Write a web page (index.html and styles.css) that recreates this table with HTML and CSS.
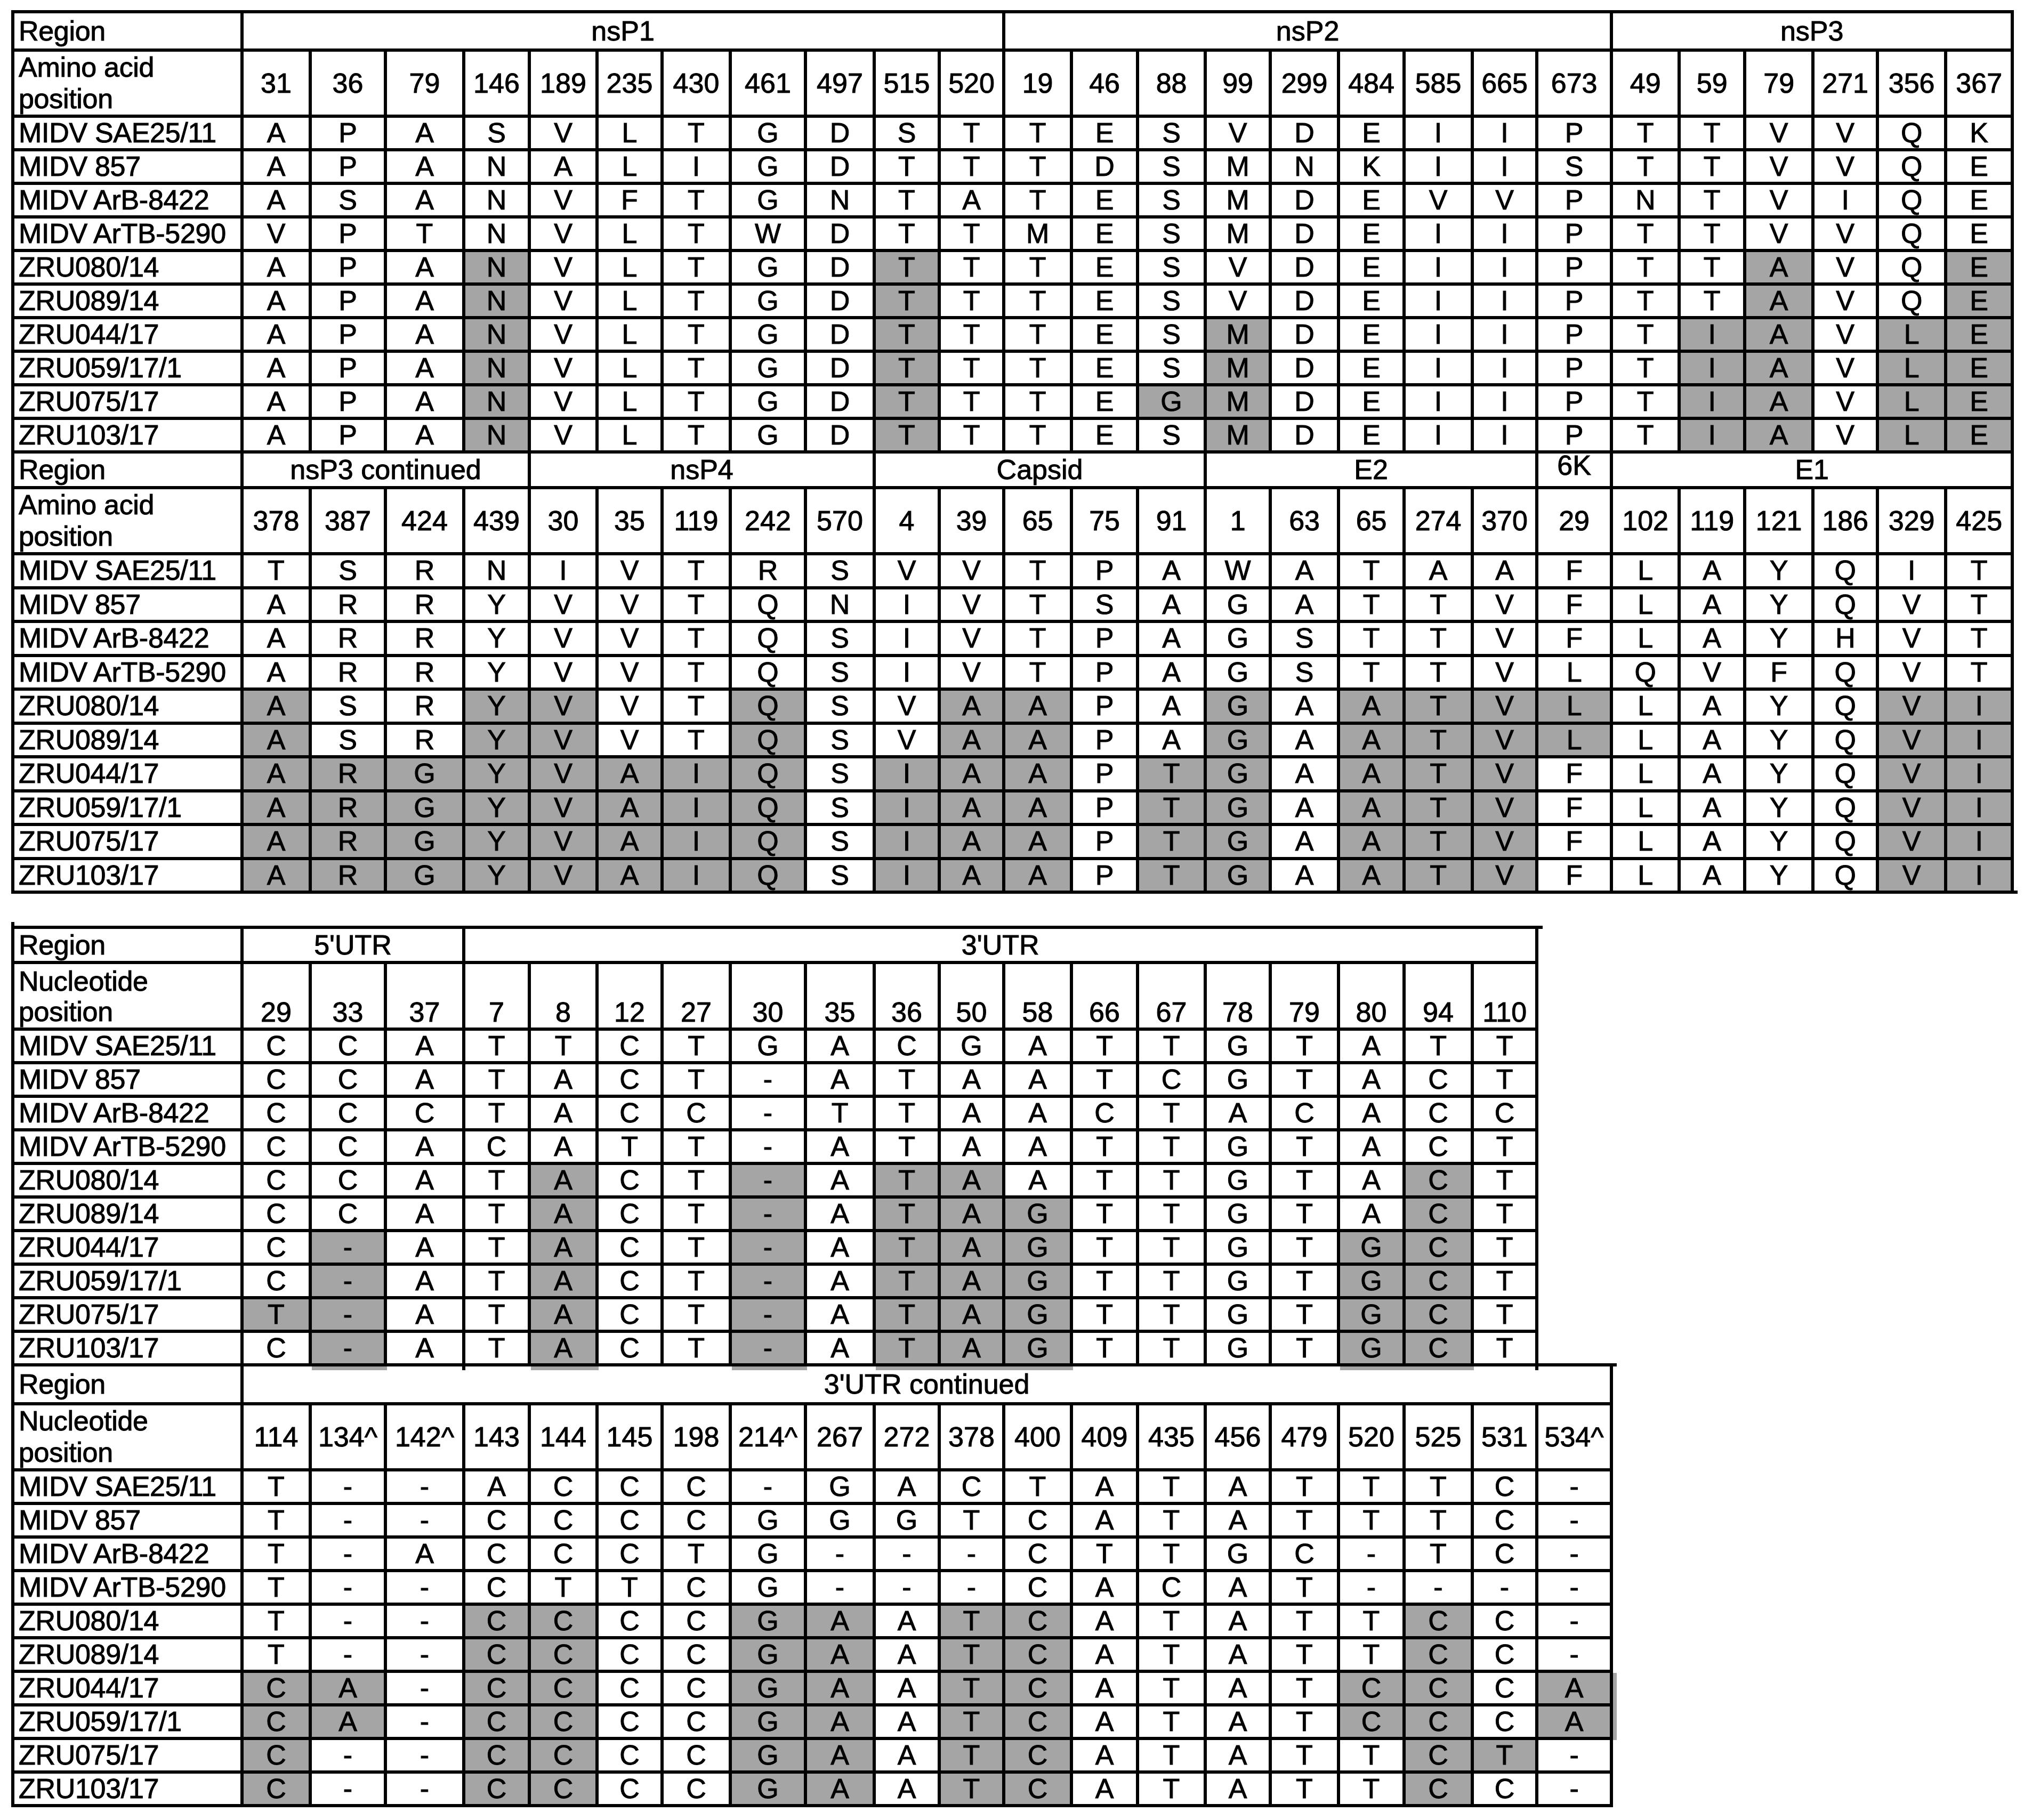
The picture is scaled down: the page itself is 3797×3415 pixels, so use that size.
FILE: index.html
```html
<!DOCTYPE html>
<html lang="en">
<head>
<meta charset="utf-8">
<title>MIDV amino acid and nucleotide differences</title>
<link rel="stylesheet" href="styles.css">
</head>
<body>
<main class="page">

<table class="grid t1">
<colgroup>
<col class="w436"><col class="w128"><col class="w141"><col class="w147"><col class="w123"><col class="w127"><col class="w122"><col class="w128"><col class="w141"><col class="w129"><col class="w122"><col class="w121"><col class="w127"><col class="w124"><col class="w127"><col class="w122"><col class="w128"><col class="w123"><col class="w128"><col class="w121"><col class="w140"><col class="w127"><col class="w123"><col class="w128"><col class="w121"><col class="w128"><col class="w125">
</colgroup>
<tbody>
<tr class="top reg reg-a"><td class="lbl">Region</td><td colspan="11">nsP1</td><td colspan="9">nsP2</td><td colspan="6">nsP3</td></tr>
<tr class="pos"><td class="lbl">Amino acid<br>position</td><td>31</td><td>36</td><td>79</td><td>146</td><td>189</td><td>235</td><td>430</td><td>461</td><td>497</td><td>515</td><td>520</td><td>19</td><td>46</td><td>88</td><td>99</td><td>299</td><td>484</td><td>585</td><td>665</td><td>673</td><td>49</td><td>59</td><td>79</td><td>271</td><td>356</td><td>367</td></tr>
<tr class="d"><td class="lbl">MIDV SAE25/11</td><td>A</td><td>P</td><td>A</td><td>S</td><td>V</td><td>L</td><td>T</td><td>G</td><td>D</td><td>S</td><td>T</td><td>T</td><td>E</td><td>S</td><td>V</td><td>D</td><td>E</td><td>I</td><td>I</td><td>P</td><td>T</td><td>T</td><td>V</td><td>V</td><td>Q</td><td>K</td></tr>
<tr class="d"><td class="lbl">MIDV 857</td><td>A</td><td>P</td><td>A</td><td>N</td><td>A</td><td>L</td><td>I</td><td>G</td><td>D</td><td>T</td><td>T</td><td>T</td><td>D</td><td>S</td><td>M</td><td>N</td><td>K</td><td>I</td><td>I</td><td>S</td><td>T</td><td>T</td><td>V</td><td>V</td><td>Q</td><td>E</td></tr>
<tr class="d"><td class="lbl">MIDV ArB-8422</td><td>A</td><td>S</td><td>A</td><td>N</td><td>V</td><td>F</td><td>T</td><td>G</td><td>N</td><td>T</td><td>A</td><td>T</td><td>E</td><td>S</td><td>M</td><td>D</td><td>E</td><td>V</td><td>V</td><td>P</td><td>N</td><td>T</td><td>V</td><td>I</td><td>Q</td><td>E</td></tr>
<tr class="d"><td class="lbl">MIDV ArTB-5290</td><td>V</td><td>P</td><td>T</td><td>N</td><td>V</td><td>L</td><td>T</td><td>W</td><td>D</td><td>T</td><td>T</td><td>M</td><td>E</td><td>S</td><td>M</td><td>D</td><td>E</td><td>I</td><td>I</td><td>P</td><td>T</td><td>T</td><td>V</td><td>V</td><td>Q</td><td>E</td></tr>
<tr class="d"><td class="lbl">ZRU080/14</td><td>A</td><td>P</td><td>A</td><td class="s">N</td><td>V</td><td>L</td><td>T</td><td>G</td><td>D</td><td class="s">T</td><td>T</td><td>T</td><td>E</td><td>S</td><td>V</td><td>D</td><td>E</td><td>I</td><td>I</td><td>P</td><td>T</td><td>T</td><td class="s">A</td><td>V</td><td>Q</td><td class="s">E</td></tr>
<tr class="d"><td class="lbl">ZRU089/14</td><td>A</td><td>P</td><td>A</td><td class="s">N</td><td>V</td><td>L</td><td>T</td><td>G</td><td>D</td><td class="s">T</td><td>T</td><td>T</td><td>E</td><td>S</td><td>V</td><td>D</td><td>E</td><td>I</td><td>I</td><td>P</td><td>T</td><td>T</td><td class="s">A</td><td>V</td><td>Q</td><td class="s">E</td></tr>
<tr class="d"><td class="lbl">ZRU044/17</td><td>A</td><td>P</td><td>A</td><td class="s">N</td><td>V</td><td>L</td><td>T</td><td>G</td><td>D</td><td class="s">T</td><td>T</td><td>T</td><td>E</td><td>S</td><td class="s">M</td><td>D</td><td>E</td><td>I</td><td>I</td><td>P</td><td>T</td><td class="s">I</td><td class="s">A</td><td>V</td><td class="s">L</td><td class="s">E</td></tr>
<tr class="d"><td class="lbl">ZRU059/17/1</td><td>A</td><td>P</td><td>A</td><td class="s">N</td><td>V</td><td>L</td><td>T</td><td>G</td><td>D</td><td class="s">T</td><td>T</td><td>T</td><td>E</td><td>S</td><td class="s">M</td><td>D</td><td>E</td><td>I</td><td>I</td><td>P</td><td>T</td><td class="s">I</td><td class="s">A</td><td>V</td><td class="s">L</td><td class="s">E</td></tr>
<tr class="d"><td class="lbl">ZRU075/17</td><td>A</td><td>P</td><td>A</td><td class="s">N</td><td>V</td><td>L</td><td>T</td><td>G</td><td>D</td><td class="s">T</td><td>T</td><td>T</td><td>E</td><td class="s">G</td><td class="s">M</td><td>D</td><td>E</td><td>I</td><td>I</td><td>P</td><td>T</td><td class="s">I</td><td class="s">A</td><td>V</td><td class="s">L</td><td class="s">E</td></tr>
<tr class="d"><td class="lbl">ZRU103/17</td><td>A</td><td>P</td><td>A</td><td class="s">N</td><td>V</td><td>L</td><td>T</td><td>G</td><td>D</td><td class="s">T</td><td>T</td><td>T</td><td>E</td><td>S</td><td class="s">M</td><td>D</td><td>E</td><td>I</td><td>I</td><td>P</td><td>T</td><td class="s">I</td><td class="s">A</td><td>V</td><td class="s">L</td><td class="s">E</td></tr>

<tr class="reg reg-b"><td class="lbl">Region</td><td colspan="4">nsP3 continued</td><td colspan="5">nsP4</td><td colspan="5">Capsid</td><td colspan="5">E2</td><td class="k6">6K</td><td colspan="6">E1</td></tr>
<tr class="pos"><td class="lbl">Amino acid<br>position</td><td>378</td><td>387</td><td>424</td><td>439</td><td>30</td><td>35</td><td>119</td><td>242</td><td>570</td><td>4</td><td>39</td><td>65</td><td>75</td><td>91</td><td>1</td><td>63</td><td>65</td><td>274</td><td>370</td><td>29</td><td>102</td><td>119</td><td>121</td><td>186</td><td>329</td><td>425</td></tr>
<tr class="d d2"><td class="lbl">MIDV SAE25/11</td><td>T</td><td>S</td><td>R</td><td>N</td><td>I</td><td>V</td><td>T</td><td>R</td><td>S</td><td>V</td><td>V</td><td>T</td><td>P</td><td>A</td><td>W</td><td>A</td><td>T</td><td>A</td><td>A</td><td>F</td><td>L</td><td>A</td><td>Y</td><td>Q</td><td>I</td><td>T</td></tr>
<tr class="d d2"><td class="lbl">MIDV 857</td><td>A</td><td>R</td><td>R</td><td>Y</td><td>V</td><td>V</td><td>T</td><td>Q</td><td>N</td><td>I</td><td>V</td><td>T</td><td>S</td><td>A</td><td>G</td><td>A</td><td>T</td><td>T</td><td>V</td><td>F</td><td>L</td><td>A</td><td>Y</td><td>Q</td><td>V</td><td>T</td></tr>
<tr class="d d2"><td class="lbl">MIDV ArB-8422</td><td>A</td><td>R</td><td>R</td><td>Y</td><td>V</td><td>V</td><td>T</td><td>Q</td><td>S</td><td>I</td><td>V</td><td>T</td><td>P</td><td>A</td><td>G</td><td>S</td><td>T</td><td>T</td><td>V</td><td>F</td><td>L</td><td>A</td><td>Y</td><td>H</td><td>V</td><td>T</td></tr>
<tr class="d d2"><td class="lbl">MIDV ArTB-5290</td><td>A</td><td>R</td><td>R</td><td>Y</td><td>V</td><td>V</td><td>T</td><td>Q</td><td>S</td><td>I</td><td>V</td><td>T</td><td>P</td><td>A</td><td>G</td><td>S</td><td>T</td><td>T</td><td>V</td><td>L</td><td>Q</td><td>V</td><td>F</td><td>Q</td><td>V</td><td>T</td></tr>
<tr class="d d2"><td class="lbl">ZRU080/14</td><td class="s">A</td><td>S</td><td>R</td><td class="s">Y</td><td class="s">V</td><td>V</td><td>T</td><td class="s">Q</td><td>S</td><td>V</td><td class="s">A</td><td class="s">A</td><td>P</td><td>A</td><td class="s">G</td><td>A</td><td class="s">A</td><td class="s">T</td><td class="s">V</td><td class="s">L</td><td>L</td><td>A</td><td>Y</td><td>Q</td><td class="s">V</td><td class="s">I</td></tr>
<tr class="d d2"><td class="lbl">ZRU089/14</td><td class="s">A</td><td>S</td><td>R</td><td class="s">Y</td><td class="s">V</td><td>V</td><td>T</td><td class="s">Q</td><td>S</td><td>V</td><td class="s">A</td><td class="s">A</td><td>P</td><td>A</td><td class="s">G</td><td>A</td><td class="s">A</td><td class="s">T</td><td class="s">V</td><td class="s">L</td><td>L</td><td>A</td><td>Y</td><td>Q</td><td class="s">V</td><td class="s">I</td></tr>
<tr class="d d2"><td class="lbl">ZRU044/17</td><td class="s">A</td><td class="s">R</td><td class="s">G</td><td class="s">Y</td><td class="s">V</td><td class="s">A</td><td class="s">I</td><td class="s">Q</td><td>S</td><td class="s">I</td><td class="s">A</td><td class="s">A</td><td>P</td><td class="s">T</td><td class="s">G</td><td>A</td><td class="s">A</td><td class="s">T</td><td class="s">V</td><td>F</td><td>L</td><td>A</td><td>Y</td><td>Q</td><td class="s">V</td><td class="s">I</td></tr>
<tr class="d d2"><td class="lbl">ZRU059/17/1</td><td class="s">A</td><td class="s">R</td><td class="s">G</td><td class="s">Y</td><td class="s">V</td><td class="s">A</td><td class="s">I</td><td class="s">Q</td><td>S</td><td class="s">I</td><td class="s">A</td><td class="s">A</td><td>P</td><td class="s">T</td><td class="s">G</td><td>A</td><td class="s">A</td><td class="s">T</td><td class="s">V</td><td>F</td><td>L</td><td>A</td><td>Y</td><td>Q</td><td class="s">V</td><td class="s">I</td></tr>
<tr class="d d2"><td class="lbl">ZRU075/17</td><td class="s">A</td><td class="s">R</td><td class="s">G</td><td class="s">Y</td><td class="s">V</td><td class="s">A</td><td class="s">I</td><td class="s">Q</td><td>S</td><td class="s">I</td><td class="s">A</td><td class="s">A</td><td>P</td><td class="s">T</td><td class="s">G</td><td>A</td><td class="s">A</td><td class="s">T</td><td class="s">V</td><td>F</td><td>L</td><td>A</td><td>Y</td><td>Q</td><td class="s">V</td><td class="s">I</td></tr>
<tr class="d d2"><td class="lbl">ZRU103/17</td><td class="s">A</td><td class="s">R</td><td class="s">G</td><td class="s">Y</td><td class="s">V</td><td class="s">A</td><td class="s">I</td><td class="s">Q</td><td>S</td><td class="s">I</td><td class="s">A</td><td class="s">A</td><td>P</td><td class="s">T</td><td class="s">G</td><td>A</td><td class="s">A</td><td class="s">T</td><td class="s">V</td><td>F</td><td>L</td><td>A</td><td>Y</td><td>Q</td><td class="s">V</td><td class="s tk ebr">I</td></tr>
</tbody>
</table>

<table class="grid t2a">
<colgroup>
<col class="w436"><col class="w128"><col class="w141"><col class="w147"><col class="w123"><col class="w127"><col class="w122"><col class="w128"><col class="w141"><col class="w129"><col class="w122"><col class="w121"><col class="w127"><col class="w124"><col class="w127"><col class="w122"><col class="w128"><col class="w123"><col class="w128"><col class="w121">
</colgroup>
<tbody>
<tr class="top reg reg-c"><td class="lbl tk ttl">Region</td><td colspan="3">5'UTR</td><td colspan="16" class="tk ter8">3'UTR</td></tr>
<tr class="pos pos-low"><td class="lbl">Nucleotide<br>position</td><td>29</td><td>33</td><td>37</td><td>7</td><td>8</td><td>12</td><td>27</td><td>30</td><td>35</td><td>36</td><td>50</td><td>58</td><td>66</td><td>67</td><td>78</td><td>79</td><td>80</td><td>94</td><td>110</td></tr>
<tr class="d"><td class="lbl">MIDV SAE25/11</td><td>C</td><td>C</td><td>A</td><td>T</td><td>T</td><td>C</td><td>T</td><td>G</td><td>A</td><td>C</td><td>G</td><td>A</td><td>T</td><td>T</td><td>G</td><td>T</td><td>A</td><td>T</td><td>T</td></tr>
<tr class="d"><td class="lbl">MIDV 857</td><td>C</td><td>C</td><td>A</td><td>T</td><td>A</td><td>C</td><td>T</td><td>-</td><td>A</td><td>T</td><td>A</td><td>A</td><td>T</td><td>C</td><td>G</td><td>T</td><td>A</td><td>C</td><td>T</td></tr>
<tr class="d"><td class="lbl">MIDV ArB-8422</td><td>C</td><td>C</td><td>C</td><td>T</td><td>A</td><td>C</td><td>C</td><td>-</td><td>T</td><td>T</td><td>A</td><td>A</td><td>C</td><td>T</td><td>A</td><td>C</td><td>A</td><td>C</td><td>C</td></tr>
<tr class="d"><td class="lbl">MIDV ArTB-5290</td><td>C</td><td>C</td><td>A</td><td>C</td><td>A</td><td>T</td><td>T</td><td>-</td><td>A</td><td>T</td><td>A</td><td>A</td><td>T</td><td>T</td><td>G</td><td>T</td><td>A</td><td>C</td><td>T</td></tr>
<tr class="d"><td class="lbl">ZRU080/14</td><td>C</td><td>C</td><td>A</td><td>T</td><td class="s">A</td><td>C</td><td>T</td><td class="s">-</td><td>A</td><td class="s">T</td><td class="s">A</td><td>A</td><td>T</td><td>T</td><td>G</td><td>T</td><td>A</td><td class="s">C</td><td>T</td></tr>
<tr class="d"><td class="lbl">ZRU089/14</td><td>C</td><td>C</td><td>A</td><td>T</td><td class="s">A</td><td>C</td><td>T</td><td class="s">-</td><td>A</td><td class="s">T</td><td class="s">A</td><td class="s">G</td><td>T</td><td>T</td><td>G</td><td>T</td><td>A</td><td class="s">C</td><td>T</td></tr>
<tr class="d"><td class="lbl">ZRU044/17</td><td>C</td><td class="s">-</td><td>A</td><td>T</td><td class="s">A</td><td>C</td><td>T</td><td class="s">-</td><td>A</td><td class="s">T</td><td class="s">A</td><td class="s">G</td><td>T</td><td>T</td><td>G</td><td>T</td><td class="s">G</td><td class="s">C</td><td>T</td></tr>
<tr class="d"><td class="lbl">ZRU059/17/1</td><td>C</td><td class="s">-</td><td>A</td><td>T</td><td class="s">A</td><td>C</td><td>T</td><td class="s">-</td><td>A</td><td class="s">T</td><td class="s">A</td><td class="s">G</td><td>T</td><td>T</td><td>G</td><td>T</td><td class="s">G</td><td class="s">C</td><td>T</td></tr>
<tr class="d"><td class="lbl">ZRU075/17</td><td class="s">T</td><td class="s">-</td><td>A</td><td>T</td><td class="s">A</td><td>C</td><td>T</td><td class="s">-</td><td>A</td><td class="s">T</td><td class="s">A</td><td class="s">G</td><td>T</td><td>T</td><td>G</td><td>T</td><td class="s">G</td><td class="s">C</td><td>T</td></tr>
<tr class="d last"><td class="lbl">ZRU103/17</td><td>C</td><td class="s">-</td><td class="tk tbr">A</td><td>T</td><td class="s">A</td><td>C</td><td>T</td><td class="s">-</td><td>A</td><td class="s">T</td><td class="s">A</td><td class="s">G</td><td>T</td><td>T</td><td>G</td><td>T</td><td class="s">G</td><td class="s">C</td><td class="tk tbr">T</td></tr>
</tbody>
</table>

<table class="grid t2b">
<colgroup>
<col class="w436"><col class="w128"><col class="w141"><col class="w147"><col class="w123"><col class="w127"><col class="w122"><col class="w128"><col class="w141"><col class="w129"><col class="w122"><col class="w121"><col class="w127"><col class="w124"><col class="w127"><col class="w122"><col class="w128"><col class="w123"><col class="w128"><col class="w121"><col class="w140">
</colgroup>
<tbody>
<tr class="reg reg-d"><td class="lbl">Region</td><td colspan="20" class="tk ter7">3'UTR continued</td></tr>
<tr class="pos"><td class="lbl">Nucleotide<br>position</td><td>114</td><td>134^</td><td>142^</td><td>143</td><td>144</td><td>145</td><td>198</td><td>214^</td><td>267</td><td>272</td><td>378</td><td>400</td><td>409</td><td>435</td><td>456</td><td>479</td><td>520</td><td>525</td><td>531</td><td>534^</td></tr>
<tr class="d"><td class="lbl">MIDV SAE25/11</td><td>T</td><td>-</td><td>-</td><td>A</td><td>C</td><td>C</td><td>C</td><td>-</td><td>G</td><td>A</td><td>C</td><td>T</td><td>A</td><td>T</td><td>A</td><td>T</td><td>T</td><td>T</td><td>C</td><td>-</td></tr>
<tr class="d"><td class="lbl">MIDV 857</td><td>T</td><td>-</td><td>-</td><td>C</td><td>C</td><td>C</td><td>C</td><td>G</td><td>G</td><td>G</td><td>T</td><td>C</td><td>A</td><td>T</td><td>A</td><td>T</td><td>T</td><td>T</td><td>C</td><td>-</td></tr>
<tr class="d"><td class="lbl">MIDV ArB-8422</td><td>T</td><td>-</td><td>A</td><td>C</td><td>C</td><td>C</td><td>T</td><td>G</td><td>-</td><td>-</td><td>-</td><td>C</td><td>T</td><td>T</td><td>G</td><td>C</td><td>-</td><td>T</td><td>C</td><td>-</td></tr>
<tr class="d"><td class="lbl">MIDV ArTB-5290</td><td>T</td><td>-</td><td>-</td><td>C</td><td>T</td><td>T</td><td>C</td><td>G</td><td>-</td><td>-</td><td>-</td><td>C</td><td>A</td><td>C</td><td>A</td><td>T</td><td>-</td><td>-</td><td>-</td><td>-</td></tr>
<tr class="d"><td class="lbl">ZRU080/14</td><td>T</td><td>-</td><td>-</td><td class="s">C</td><td class="s">C</td><td>C</td><td>C</td><td class="s">G</td><td class="s">A</td><td>A</td><td class="s">T</td><td class="s">C</td><td>A</td><td>T</td><td>A</td><td>T</td><td>T</td><td class="s">C</td><td>C</td><td>-</td></tr>
<tr class="d"><td class="lbl">ZRU089/14</td><td>T</td><td>-</td><td>-</td><td class="s">C</td><td class="s">C</td><td>C</td><td>C</td><td class="s">G</td><td class="s">A</td><td>A</td><td class="s">T</td><td class="s">C</td><td>A</td><td>T</td><td>A</td><td>T</td><td>T</td><td class="s">C</td><td>C</td><td>-</td></tr>
<tr class="d"><td class="lbl">ZRU044/17</td><td class="s">C</td><td class="s">A</td><td>-</td><td class="s">C</td><td class="s">C</td><td>C</td><td>C</td><td class="s">G</td><td class="s">A</td><td>A</td><td class="s">T</td><td class="s">C</td><td>A</td><td>T</td><td>A</td><td>T</td><td class="s">C</td><td class="s">C</td><td>C</td><td class="s sx">A</td></tr>
<tr class="d"><td class="lbl">ZRU059/17/1</td><td class="s">C</td><td class="s">A</td><td>-</td><td class="s">C</td><td class="s">C</td><td>C</td><td>C</td><td class="s">G</td><td class="s">A</td><td>A</td><td class="s">T</td><td class="s">C</td><td>A</td><td>T</td><td>A</td><td>T</td><td class="s">C</td><td class="s">C</td><td>C</td><td class="s sx">A</td></tr>
<tr class="d"><td class="lbl">ZRU075/17</td><td class="s">C</td><td>-</td><td>-</td><td class="s">C</td><td class="s">C</td><td>C</td><td>C</td><td class="s">G</td><td class="s">A</td><td>A</td><td class="s">T</td><td class="s">C</td><td>A</td><td>T</td><td>A</td><td>T</td><td>T</td><td class="s">C</td><td class="s">T</td><td>-</td></tr>
<tr class="d"><td class="lbl tk tbl tbr">ZRU103/17</td><td class="s">C</td><td>-</td><td>-</td><td class="s">C</td><td class="s">C</td><td>C</td><td>C</td><td class="s">G</td><td class="s">A</td><td>A</td><td class="s">T</td><td class="s">C</td><td>A</td><td>T</td><td>A</td><td>T</td><td>T</td><td class="s">C</td><td>C</td><td class="tk tbr">-</td></tr>
</tbody>
</table>

</main>
</body>
</html>
```

FILE: styles.css
```css
html, body {
  margin: 0;
  padding: 0;
  background: #ffffff;
}

body {
  font-family: "Liberation Sans", Arial, "Helvetica Neue", sans-serif;
  color: #000000;
}

.page {
  padding: 19px 0 0 21px;
}

.grid {
  border-collapse: separate;
  border-spacing: 0;
  table-layout: fixed;
}

.t1 { width: 3757px; }
.t2a { width: 2865px; margin-top: 60px; }
.t2b { width: 3005px; }

.w436 { width: 436px; }
.w121 { width: 121px; }
.w122 { width: 122px; }
.w123 { width: 123px; }
.w124 { width: 124px; }
.w125 { width: 125px; }
.w127 { width: 127px; }
.w128 { width: 128px; }
.w129 { width: 129px; }
.w140 { width: 140px; }
.w141 { width: 141px; }
.w147 { width: 147px; }

.grid td {
  box-sizing: border-box;
  padding: 0;
  border-right: 6px solid #000;
  border-bottom: 6px solid #000;
  text-align: center;
  vertical-align: middle;
  font-size: 52px;
  line-height: 57px;
  white-space: nowrap;
  -webkit-text-stroke: 1px #000;
}

.grid td.lbl {
  border-left: 6px solid #000;
  text-align: left;
  padding-left: 8px;
  letter-spacing: -0.3px;
}

.grid tr.top td {
  border-top: 6px solid #000;
}

.grid td.s {
  background: #a5a5a5;
}

/* header rows */
.reg-a td { height: 78px; }
.reg-b td { height: 67px; }
.reg-c td { height: 72px; }
.reg-d td {
  height: 79px;
  border-top: 6px solid #000;
}

.pos td { height: 124px; }
.pos-low td { height: 125px; }

.pos td.lbl {
  vertical-align: top;
  line-height: 59px;
  white-space: normal;
}

.pos-low td {
  vertical-align: bottom;
  line-height: 57px;
}

.pos-low td.lbl {
  padding-top: 4px;
  line-height: 57px;
}

.reg td.k6 {
  vertical-align: top;
  line-height: 45px;
}

/* data rows */
.d td { height: 63px; }
.d2 td { height: 63.5px; }

.t2a tr.last td {
  border-bottom: 0;
  height: 57px;
}

.t2a tr.last td.s {
  box-shadow: 0 13px 0 #a5a5a5;
}

.t2b td.sx {
  box-shadow: 7px 0 0 #a5a5a5;
}

/* small print artefacts of the original table edges */
.tk { position: relative; }

.tbr::after,
.tbl::before,
.ttl::before,
.ter8::after,
.ter7::after,
.ebr::after {
  content: "";
  position: absolute;
  background: #000;
}

.tbr::after {
  right: -6px;
  bottom: -13px;
  width: 6px;
  height: 7px;
}

.tbl::before {
  left: -6px;
  bottom: -13px;
  width: 6px;
  height: 7px;
}

.ttl::before {
  left: -6px;
  top: -13px;
  width: 6px;
  height: 7px;
}

.ter8::after {
  right: -14px;
  top: -6px;
  width: 8px;
  height: 6px;
}

.ter7::after {
  right: -13px;
  top: -6px;
  width: 7px;
  height: 6px;
}

.ebr::after {
  right: -13px;
  bottom: -6px;
  width: 7px;
  height: 6px;
}
```
